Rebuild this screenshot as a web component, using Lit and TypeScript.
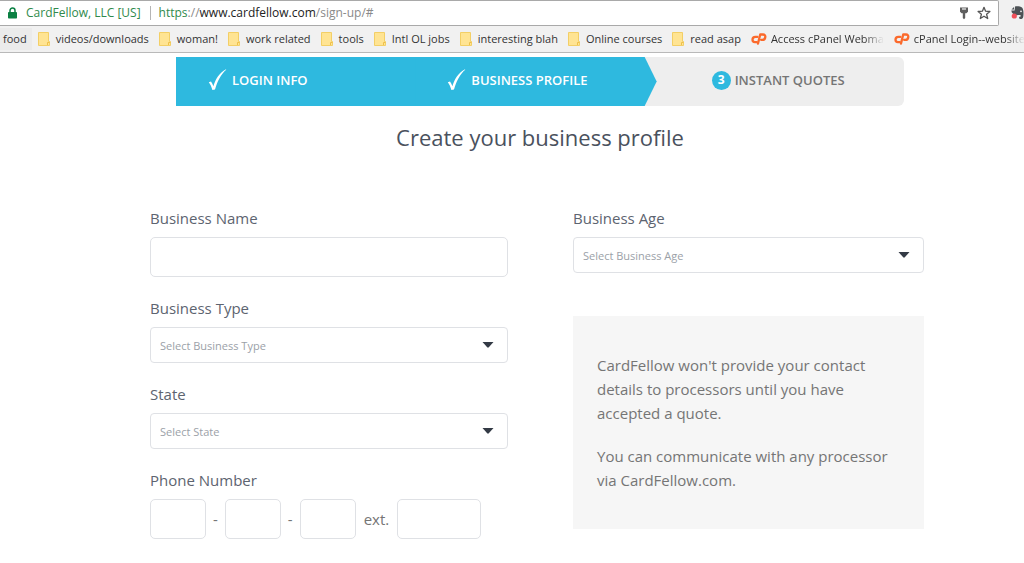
import { LitElement, html, css, nothing } from "lit";
import { customElement, property } from "lit/decorators.js";
import { classMap } from "lit/directives/class-map.js";

interface Bookmark {
  title: string;
  icon: "none" | "folder" | "cpanel";
}

const BOOKMARKS: Bookmark[] = [
  { title: "food", icon: "none" },
  { title: "videos/downloads", icon: "folder" },
  { title: "woman!", icon: "folder" },
  { title: "work related", icon: "folder" },
  { title: "tools", icon: "folder" },
  { title: "Intl OL jobs", icon: "folder" },
  { title: "interesting blah", icon: "folder" },
  { title: "Online courses", icon: "folder" },
  { title: "read asap", icon: "folder" },
  { title: "Access cPanel Webma", icon: "cpanel" },
  { title: "cPanel Login--website", icon: "cpanel" },
];

@customElement("browser-bar")
class BrowserBar extends LitElement {
  static styles = css`
    :host {
      display: block;
      font-family: "Open Sans", "Noto Sans", sans-serif;
      background: #f1f1f1;
      border-bottom: 1px solid #b9b9b9;
    }
    .toolbar {
      display: flex;
      align-items: stretch;
      height: 26px;
    }
    .address {
      flex: 1;
      display: flex;
      align-items: center;
      box-sizing: border-box;
      padding: 0 7px 0 8px;
      background: #fff;
      border: 1px solid #a9a9a9;
      border-left: 0;
      border-radius: 0 2px 2px 0;
      font-size: 12px;
      line-height: 24px;
      white-space: nowrap;
    }
    .lock {
      width: 9px;
      height: 12px;
      margin-right: 9px;
    }
    .owner {
      color: #2f8a4c;
      padding-right: 9px;
    }
    .rule {
      width: 1px;
      height: 14px;
      background: #b5b5b5;
      margin-right: 8px;
    }
    .url {
      flex: 1;
      color: #8a8a8a;
    }
    .scheme {
      color: #2f8a4c;
    }
    .domain {
      color: #222;
    }
    .icon-button {
      display: flex;
      padding: 0;
      border: 0;
      background: none;
    }
    .address .icon-button + .icon-button {
      margin-left: 6px;
    }
    .extensions {
      display: flex;
      align-items: center;
      justify-content: flex-end;
      width: 25px;
      overflow: hidden;
    }
    .bookmarks {
      display: flex;
      align-items: center;
      gap: 10px;
      height: 26px;
      overflow: hidden;
      font-size: 11px;
      line-height: 16px;
    }
    .bookmark {
      display: flex;
      flex: none;
      align-items: center;
      gap: 6px;
      color: #333;
      text-decoration: none;
      white-space: nowrap;
    }
    .plain {
      padding: 3px 5px 3px 3px;
      margin-right: -4px;
      background: #ebebeb;
    }
    .fading {
      gap: 4px;
    }
    .fading .name {
      mask-image: linear-gradient(to right, #000 82%, transparent);
    }
  `;

  private bookmarkIcon(kind: Bookmark["icon"]) {
    if (kind === "folder") {
      return html`<svg width="12" height="14" viewBox="0 0 12 14" aria-hidden="true">
        <path d="M.5 .5H10.5V9.5H11.5V13.5H.5Z" fill="#ffe493" stroke="#f3cf66" />
        <path d="M9.500 13V10.500H11.500" fill="none" stroke="#eec04b" />
      </svg>`;
    }
    if (kind === "cpanel") {
      return html`<svg width="16" height="12" viewBox="0 0 16 12" aria-hidden="true">
        <g fill="none" stroke="#fb6a2c" stroke-width="2.3" stroke-linecap="round" stroke-linejoin="round">
          <path d="M6.4 3.9H4.4C2.8 3.9 1.500 5 1.500 6.8C1.500 8.3 2.500 9.1 3.8 9.1H5.8" />
          <path d="M7 10.6L9.2 1.500H12C13.6 1.500 14.500 2.500 14.3 4C14.1 5.7 12.9 6.9 11.4 6.9H10.2" />
        </g>
      </svg>`;
    }
    return nothing;
  }

  render() {
    return html`
      <div class="toolbar">
        <div class="address">
          <svg class="lock" viewBox="0 0 9 12" aria-hidden="true">
            <path d="M2 6V3.500a2.500 2.500 0 0 1 5 0V6" fill="none" stroke="#0b8043" stroke-width="1.5" />
            <rect x="0" y="5" width="9" height="6.5" rx=".8" fill="#0b8043" />
          </svg>
          <span class="owner">CardFellow, LLC [US]</span>
          <span class="rule"></span>
          <span class="url"
            ><span class="scheme">https</span>://<span class="domain">www.cardfellow.com</span>/sign-up/#</span
          >
          <button class="icon-button" aria-label="Saved password">
            <svg width="14" height="14" viewBox="0 0 14 14">
              <path d="M3 1.500h8v4.2l-1.600 1.500H8.2V12L7 13.2 5.8 12V7.2H4.6L3 5.7Z" fill="#5f5f5f" />
              <path d="M5 3h4" stroke="#fff" stroke-width="1.1" />
            </svg>
          </button>
          <button class="icon-button" aria-label="Bookmark this page">
            <svg width="14" height="14" viewBox="0 0 14 14">
              <path
                d="M7 1.300L8.600 5.200L12.900 5.500L9.600 8.300L10.700 12.500L7 10.200L3.300 12.500L4.400 8.300L1.100 5.500L5.400 5.200Z"
                fill="none"
                stroke="#555"
                stroke-width="1.3"
                stroke-linejoin="round"
              />
            </svg>
          </button>
        </div>
        <div class="extensions">
          <button class="icon-button" aria-label="Web clipper">
            <svg width="14" height="16" viewBox="0 0 14 16">
              <path
                d="M5 1.500C7.500 .8 10.500 1.500 12 2.500C13.500 4 13.8 8 13.3 11.500C13 14 11 14.500 9.6 13.8C8.500 13 9 11.2 10.8 11.4L10.6 10.2C8.6 9.8 7.6 10.4 6.500 10.2C4 9.6 1.600 8.500 1.300 5.500H4.600Z"
                fill="#4d5256"
              />
              <path d="M1.500 4.400L4 1.900V4.400Z" fill="#4d5256" />
              <circle cx="11" cy="6.3" r=".9" fill="#f1f1f1" />
              <circle cx="4.3" cy="11" r="2.6" fill="#f0505a" />
            </svg>
          </button>
        </div>
      </div>
      <nav class="bookmarks" aria-label="Bookmarks">
        ${BOOKMARKS.map(
          (b) => html`<a
            href="#"
            class=${classMap({ bookmark: true, plain: b.icon === "none", fading: b.icon === "cpanel" })}
            >${this.bookmarkIcon(b.icon)}<span class="name">${b.title}</span></a
          >`
        )}
      </nav>
    `;
  }
}

@customElement("sign-up-steps")
class SignUpSteps extends LitElement {
  static styles = css`
    :host {
      display: block;
      font-family: "Open Sans", "Noto Sans", sans-serif;
    }
    .steps {
      display: grid;
      grid-template-columns: 240fr 240fr 247fr;
      margin: 0;
      padding: 0;
      list-style: none;
      height: 49px;
      background: #eee;
      border-radius: 0 6px 6px 0;
      font-size: 13px;
      font-weight: 600;
      line-height: 20px;
    }
    .step {
      display: flex;
      align-items: center;
      gap: 5px;
      padding: 0 0 3px 32px;
      color: #757575;
    }
    .done {
      background: #2eb9df;
      color: #fff;
    }
    .current {
      margin-left: -1px;
      clip-path: polygon(0 0, calc(100% - 12px) 0, 100% 50%, calc(100% - 12px) 100%, 0 100%);
    }
    .upcoming {
      padding-left: 55px;
      gap: 4px;
    }
    .number {
      display: flex;
      align-items: center;
      justify-content: center;
      width: 19px;
      height: 19px;
      border-radius: 50%;
      background: #2eb9df;
      color: #fff;
      font-weight: 700;
      font-size: 12px;
    }
  `;

  private check() {
    return html`<svg width="19" height="24" viewBox="0 0 19 24" aria-hidden="true">
      <path
        d="M.8 14.2L3 13.4C4 14.8 4.8 16.4 5.4 18.2C7.4 11.6 11.2 4.6 18 1.2L18.2 1.7C12.8 6.2 9.2 13.6 7 21.600L4.4 22C3.6 19 2.4 16.4 .8 14.2Z"
        fill="#fff"
      />
    </svg>`;
  }

  render() {
    return html`<ol class="steps">
      <li class="step done">${this.check()}<span>LOGIN INFO</span></li>
      <li class="step done current">${this.check()}<span>BUSINESS PROFILE</span></li>
      <li class="step upcoming"><span class="number">3</span><span>INSTANT QUOTES</span></li>
    </ol>`;
  }
}

@customElement("select-field")
class SelectField extends LitElement {
  @property() label = "";
  @property() placeholder = "";

  static styles = css`
    :host {
      display: flex;
      flex-direction: column;
      gap: 7px;
      font-family: "Open Sans", "Noto Sans", sans-serif;
    }
    .label {
      color: #5d6470;
      font-size: 15px;
      line-height: 24px;
    }
    .control {
      display: grid;
      align-items: center;
    }
    .select {
      grid-area: 1 / 1;
      appearance: none;
      box-sizing: border-box;
      width: 100%;
      height: 36px;
      margin: 0;
      padding: 0 32px 0 9px;
      border: 1px solid #dfe1e5;
      border-radius: 4px;
      background: #fff;
      color: #9ba1a8;
      font-family: inherit;
      font-size: 11px;
    }
    .arrow {
      grid-area: 1 / 1;
      justify-self: end;
      margin-right: 14px;
      pointer-events: none;
    }
  `;

  render() {
    return html`
      <label class="label" for="field">${this.label}</label>
      <div class="control">
        <select class="select" id="field">
          <option>${this.placeholder}</option>
        </select>
        <svg class="arrow" width="12" height="6" viewBox="0 0 12 6" aria-hidden="true">
          <path d="M.5 0H11.5L6.8 5.3Q6 6 5.2 5.3Z" fill="#333a45" />
        </svg>
      </div>
    `;
  }
}

@customElement("app-root")
class AppRoot extends LitElement {
  static styles = css`
    :host {
      display: block;
      min-height: 100vh;
      background: #fff;
      font-family: "Open Sans", "Noto Sans", sans-serif;
      font-size: 15px;
      line-height: 24px;
      color: #757575;
    }
    .page {
      padding: 4px 100px 0 150px;
    }
    .intro {
      padding: 0 20px 0 26px;
    }
    .title {
      margin: 15px 0 53px;
      color: #4a515d;
      font-size: 22px;
      font-weight: 400;
      line-height: 32px;
      text-align: center;
    }
    .form {
      display: grid;
      grid-template-columns: 358fr 351fr;
      column-gap: 65px;
      align-items: start;
    }
    .column {
      display: flex;
      flex-direction: column;
      gap: 19px;
    }
    .side {
      gap: 43px;
    }
    .field {
      display: flex;
      flex-direction: column;
      gap: 7px;
    }
    .label {
      color: #5d6470;
    }
    .text {
      box-sizing: border-box;
      width: 100%;
      height: 40px;
      margin: 0;
      padding: 0 9px;
      border: 1px solid #dfe1e5;
      border-radius: 5px;
      background: #fff;
      color: #5d6470;
      font-family: inherit;
      font-size: 15px;
    }
    .phone {
      display: flex;
      align-items: center;
      gap: 7px;
    }
    .short {
      width: 56px;
    }
    .extension {
      width: 84px;
    }
    .extension-label {
      padding: 0 1px;
    }
    .note {
      padding: 37px 24px;
      background: #f6f6f6;
    }
    .note p {
      margin: 0;
    }
    .note p + p {
      margin-top: 19px;
    }
  `;

  render() {
    return html`
      <browser-bar></browser-bar>
      <main class="page">
        <header class="intro">
          <sign-up-steps></sign-up-steps>
          <h1 class="title">Create your business profile</h1>
        </header>
        <form class="form">
          <div class="column">
            <div class="field">
              <label class="label" for="business-name">Business Name</label>
              <input class="text" id="business-name" type="text" />
            </div>
            <select-field label="Business Type" placeholder="Select Business Type"></select-field>
            <select-field label="State" placeholder="Select State"></select-field>
            <div class="field" role="group" aria-labelledby="phone-label">
              <label class="label" id="phone-label" for="area">Phone Number</label>
              <div class="phone">
                <input class="text short" id="area" type="tel" />
                <span>-</span>
                <input class="text short" type="tel" aria-label="Prefix" />
                <span>-</span>
                <input class="text short" type="tel" aria-label="Line number" />
                <label class="extension-label" for="ext">ext.</label>
                <input class="text extension" id="ext" type="tel" />
              </div>
            </div>
          </div>
          <div class="column side">
            <select-field label="Business Age" placeholder="Select Business Age"></select-field>
            <aside class="note">
              <p>CardFellow won't provide your contact details to processors until you have accepted a quote.</p>
              <p>You can communicate with any processor via CardFellow.com.</p>
            </aside>
          </div>
        </form>
      </main>
    `;
  }
}
